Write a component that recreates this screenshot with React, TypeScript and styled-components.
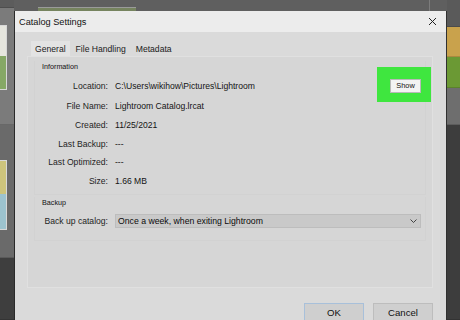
import React from "react";
import styled, { createGlobalStyle } from "styled-components";

const GlobalStyle = createGlobalStyle`
  html, body {
    margin: 0;
    padding: 0;
    background: #3f3f3f;
    overflow: hidden;
  }
  body {
    font-family: "Liberation Sans", Arial, sans-serif;
    color: #161616;
  }
`;

const Screen = styled.div`
  display: flex;
  width: 460px;
  height: 320px;
  overflow: hidden;
`;

// ---- backdrop (the Lightroom library behind the dialog) ----

const Rail = styled.div<{ $w: number }>`
  width: ${(p) => p.$w}px;
  flex-shrink: 0;
  display: flex;
  flex-direction: column;
`;

const RailBlock = styled.div<{ $h?: number; $bg: string; $pad?: number }>`
  height: ${(p) => (p.$h ? `${p.$h}px` : "auto")};
  flex: ${(p) => (p.$h ? "0 0 auto" : "1")};
  background: ${(p) => p.$bg};
  padding-top: ${(p) => p.$pad ?? 0}px;
  box-sizing: border-box;
  border-bottom: 1px solid rgba(0, 0, 0, 0.15);
`;

const Thumb = styled.div`
  width: 6px;
  display: flex;
  flex-direction: column;
  border: 1px solid #d8d8d8;
  border-left: none;
`;

const ThumbPart = styled.div<{ $h: number; $bg: string }>`
  height: ${(p) => p.$h}px;
  background: ${(p) => p.$bg};
`;

const Center = styled.div`
  flex: 1;
  display: flex;
  flex-direction: column;
  min-width: 0;
`;

const TopStrip = styled.div`
  height: 11px;
  flex-shrink: 0;
  background: #5f5f5f;
  display: flex;
  align-items: flex-end;
  padding: 0 17px 0 24px;
`;

const StripThumb = styled.div`
  width: 98px;
  height: 3px;
  background: #76845f;
  border-top: 1px solid #9a9a9a;
`;

const StripDivider = styled.div`
  margin-left: auto;
  width: 1px;
  height: 11px;
  background: #7c7c7c;
`;

// ---- dialog ----

const Dialog = styled.div`
  flex: 1;
  display: flex;
  flex-direction: column;
  background: #d5d5d5;
  border-left: 1px solid #2a2a2a;
  border-right: 1px solid #303030;
`;

const TitleBar = styled.div`
  height: 21px;
  flex-shrink: 0;
  display: flex;
  align-items: center;
  padding: 0 9px 0 4px;
  background: #ececec;
  font-size: 9.2px;
  color: #111;
`;

const CloseButton = styled.div`
  margin-left: auto;
  display: flex;
`;

const Body = styled.div`
  flex: 1;
  display: flex;
  flex-direction: column;
  padding: 0 13px 0 12px;
  background: #dadada;
`;

const TabStrip = styled.div`
  height: 24px;
  display: flex;
  align-items: flex-end;
  padding-left: 4px;
  gap: 2px;
`;

const Tab = styled.div<{ $active?: boolean }>`
  height: 15px;
  line-height: 16px;
  padding: 0 4px;
  font-size: 8.6px;
  color: #1a1a1a;
  background: ${(p) => (p.$active ? "#e3e3e3" : "transparent")};
`;

const Panel = styled.div`
  height: 232px;
  box-sizing: border-box;
  border: 1px solid #e0e0e0;
  background: #d6d6d6;
  padding-top: 4px;
`;

const Group = styled.div<{ $gap?: number; $bottom: number }>`
  margin: ${(p) => p.$gap ?? 0}px 6px 0 6px;
  padding: 0 4px ${(p) => p.$bottom}px 0;
  border: 1px solid #d2d2d2;
  border-top: none;
`;

const GroupTitle = styled.div`
  height: 12px;
  line-height: 12px;
  padding-left: 7px;
  font-size: 7.2px;
  color: #111;
`;

const Rows = styled.div<{ $top: number }>`
  margin-top: ${(p) => p.$top}px;
  display: flex;
  flex-direction: column;
`;

const Row = styled.div<{ $h: number }>`
  height: ${(p) => p.$h}px;
  display: grid;
  grid-template-columns: 73px 1fr auto;
  column-gap: 7px;
  align-items: center;
  font-size: 8.6px;
`;

const Label = styled.span`
  text-align: right;
  color: #1e1e1e;
  white-space: nowrap;
`;

const Value = styled.span`
  color: #141414;
  white-space: nowrap;
`;

const Highlight = styled.div`
  position: relative;
  display: flex;

  &::before {
    content: "";
    position: absolute;
    top: -12px;
    bottom: -9px;
    left: -13px;
    right: -10px;
    background: #3fe63f;
  }
`;

const SmallButton = styled.div`
  position: relative;
  width: 29px;
  height: 12px;
  line-height: 12px;
  text-align: center;
  font-size: 7.4px;
  color: #111;
  background: #f3f3f3;
  border: 1px solid #b9b9b9;
`;

const Select = styled.div`
  grid-column: 2 / 4;
  height: 14px;
  box-sizing: border-box;
  display: flex;
  align-items: center;
  padding: 0 3px 0 2px;
  background: #c9c9c9;
  border: 1px solid #bdbdbd;
  font-size: 8.7px;
  color: #0c0c0c;
`;

const Chevron = styled.svg`
  margin-left: auto;
`;

const Footer = styled.div`
  display: flex;
  justify-content: flex-end;
  gap: 9px;
  margin-top: 15px;
`;

const DialogButton = styled.div<{ $default?: boolean }>`
  width: 60px;
  height: 20px;
  box-sizing: border-box;
  line-height: 18px;
  text-align: center;
  font-size: 9.6px;
  color: #111;
  background: #cfcfcf;
  border: 1px solid ${(p) => (p.$default ? "#a8c0da" : "#bdbdbd")};
`;

const info: [string, string][] = [
  ["File Name:", "Lightroom Catalog.lrcat"],
  ["Created:", "11/25/2021"],
  ["Last Backup:", "---"],
  ["Last Optimized:", "---"],
  ["Size:", "1.66 MB"],
];

const rowHeights = [20, 18.5, 18.5, 18.5, 18.5];

const App: React.FC = () => {
  return (
    <>
      <GlobalStyle />
      <Screen>
        <Rail $w={14}>
          <RailBlock $h={8} $bg="#5c5c5c" />
          <RailBlock $h={117} $bg="#7b7b7b" $pad={17}>
            <Thumb>
              <ThumbPart $h={30} $bg="#e6e6de" />
              <ThumbPart $h={33} $bg="#86a866" />
            </Thumb>
          </RailBlock>
          <RailBlock $h={133} $bg="#6a6a6a" $pad={35}>
            <Thumb>
              <ThumbPart $h={33} $bg="#cdc47c" />
              <ThumbPart $h={35} $bg="#9cc3cf" />
            </Thumb>
          </RailBlock>
          <RailBlock $bg="#3e3e3e" />
        </Rail>

        <Center>
          <TopStrip>
            <StripThumb />
            <StripDivider />
          </TopStrip>
          <Dialog>
            <TitleBar>
              Catalog Settings
              <CloseButton>
                <svg width="9" height="9" viewBox="0 0 9 9">
                  <path d="M1 1 L8 8 M8 1 L1 8" stroke="#222" strokeWidth="1" />
                </svg>
              </CloseButton>
            </TitleBar>
            <Body>
              <TabStrip>
                <Tab $active>General</Tab>
                <Tab>File Handling</Tab>
                <Tab>Metadata</Tab>
              </TabStrip>
              <Panel>
                <Group $bottom={4}>
                  <GroupTitle>Information</GroupTitle>
                  <Rows $top={3}>
                    <Row $h={20}>
                      <Label>Location:</Label>
                      <Value>C:\Users\wikihow\Pictures\Lightroom</Value>
                      <Highlight>
                        <SmallButton>Show</SmallButton>
                      </Highlight>
                    </Row>
                    {info.map(([label, value], i) => (
                      <Row key={label} $h={rowHeights[i]}>
                        <Label>{label}</Label>
                        <Value>{value}</Value>
                      </Row>
                    ))}
                  </Rows>
                </Group>
                <Group $gap={2} $bottom={11}>
                  <GroupTitle>Backup</GroupTitle>
                  <Rows $top={4}>
                    <Row $h={16}>
                      <Label>Back up catalog:</Label>
                      <Select>
                        Once a week, when exiting Lightroom
                        <Chevron width="7" height="4" viewBox="0 0 7 4">
                          <path d="M0.5 0.5 L3.5 3.5 L6.5 0.5" fill="none" stroke="#333" strokeWidth="0.9" />
                        </Chevron>
                      </Select>
                    </Row>
                  </Rows>
                </Group>
              </Panel>
              <Footer>
                <DialogButton $default>OK</DialogButton>
                <DialogButton>Cancel</DialogButton>
              </Footer>
            </Body>
          </Dialog>
        </Center>

        <Rail $w={13}>
          <RailBlock $h={27} $bg="#5a5a5a" />
          <RailBlock $h={30} $bg="#c9a24c" />
          <RailBlock $h={31} $bg="#6b9934" />
          <RailBlock $h={37} $bg="#6e6e6e" />
          <RailBlock $bg="#3d3d3d" />
        </Rail>
      </Screen>
    </>
  );
};

export default App;
